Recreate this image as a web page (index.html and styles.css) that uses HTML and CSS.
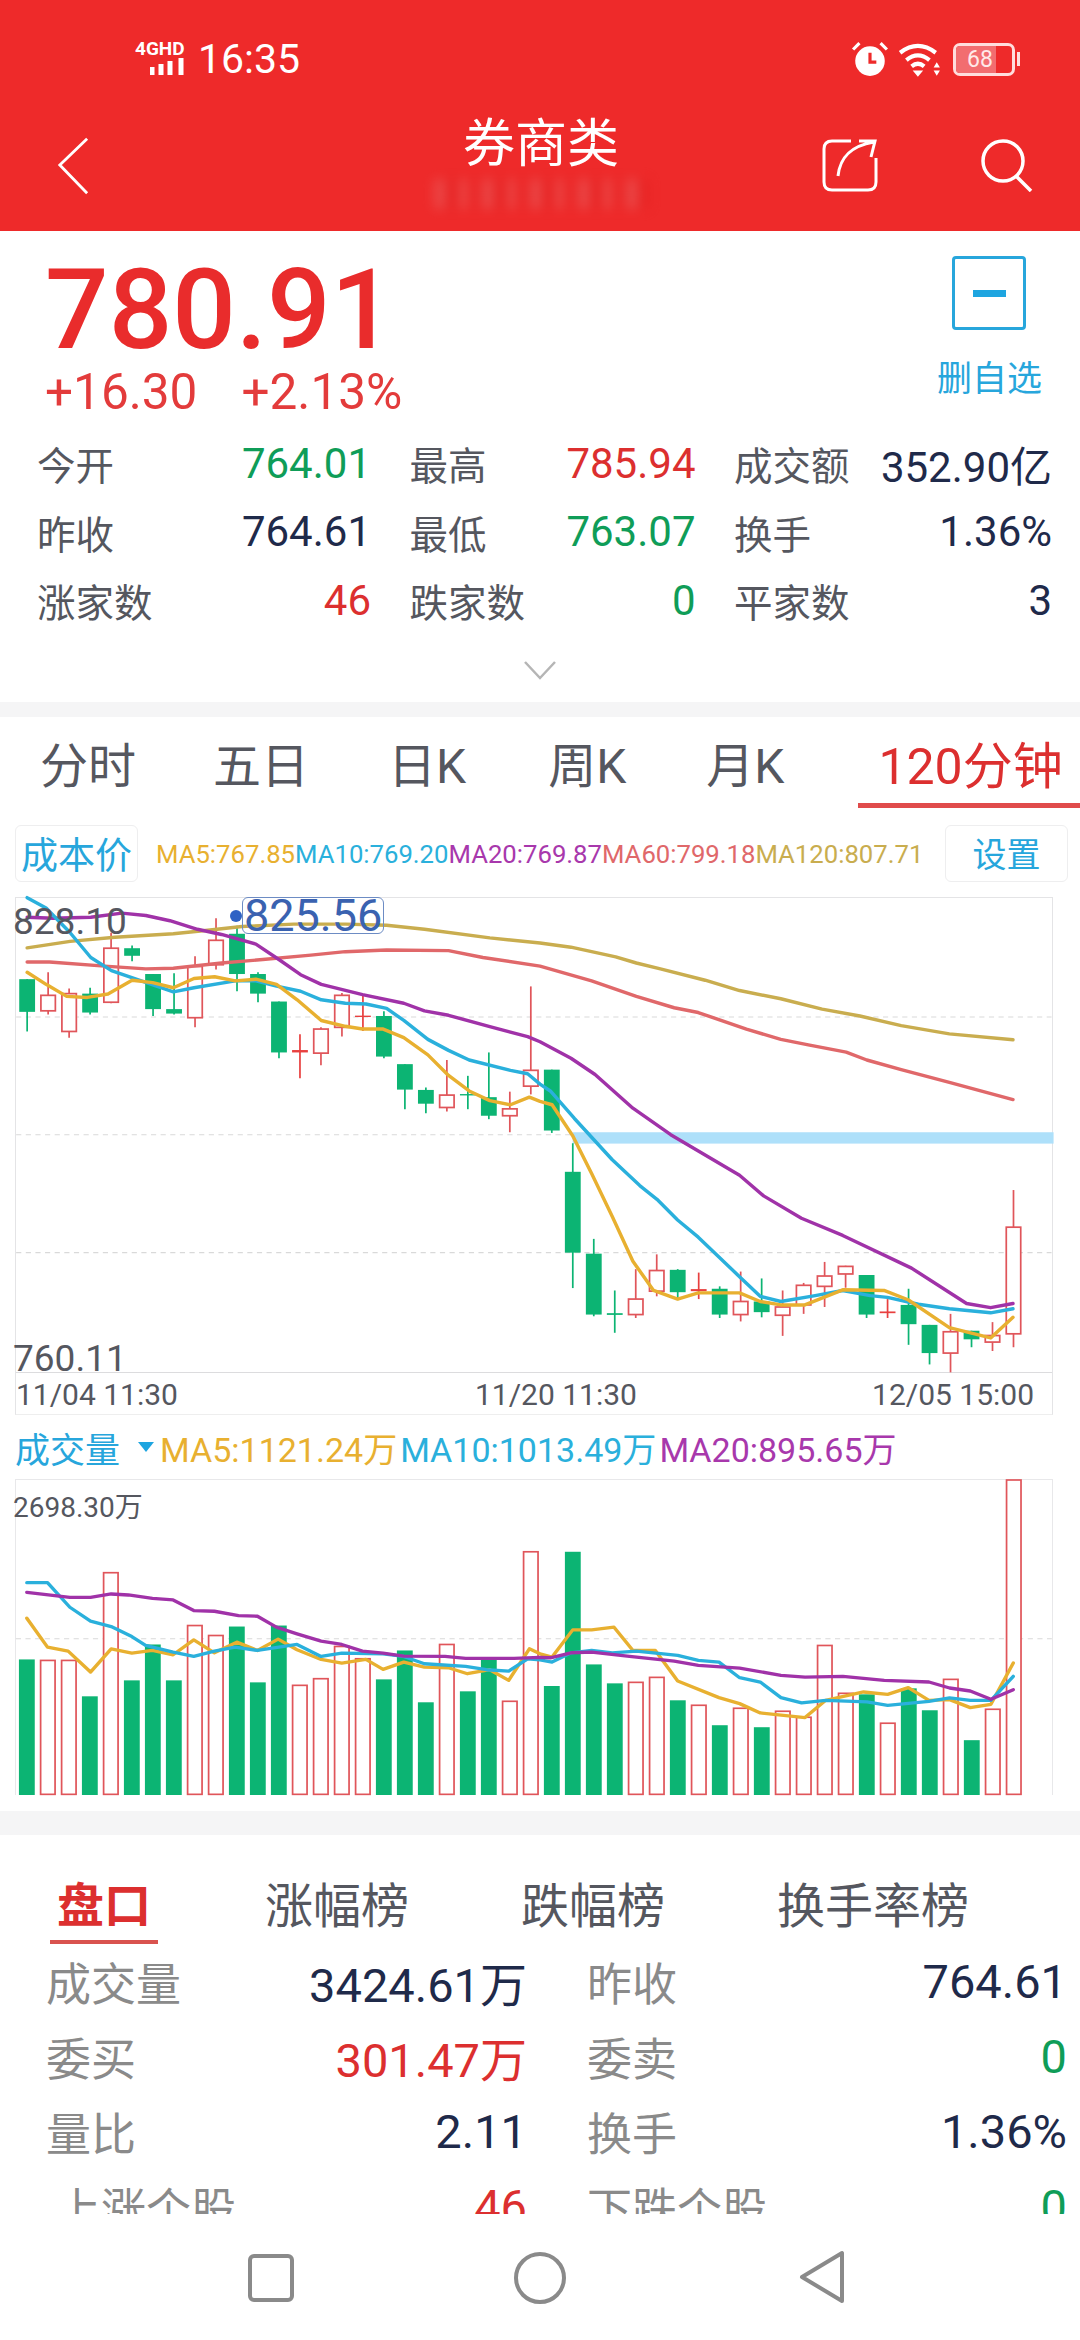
FILE: index.html
```html
<!DOCTYPE html>
<html lang="zh-CN">
<head>
  <meta charset="UTF-8">
  <title>券商类</title>
  <meta name="viewport" content="width=device-width, initial-scale=1.0">
  <link rel="stylesheet" href="styles.css">
</head>
<body>
  <header class="topbar">
    <div class="statusbar">
      <div class="net">
        <span class="net-type">4GHD</span>
        <svg class="net-bars" viewBox="0 0 38 18"><path d="M2 9v8M11 6v11M20 3v14M31 0v17" stroke="#fff" stroke-width="5"/></svg>
      </div>
      <span class="clock">16:35</span>
      <div class="status-right">
        <svg class="ic-alarm" viewBox="0 0 36 36"><circle cx="18" cy="20" r="14" fill="#fff"/><path d="M18 12v9h6" fill="none" stroke="#ee2a2a" stroke-width="3"/><path d="M2 9l6-6M34 9l-6-6" stroke="#fff" stroke-width="3"/></svg>
        <svg class="ic-wifi" viewBox="0 0 42 36"><path d="M2 12q17-13 34 0M8 19q11-9 22 0M13 25q6-5 12 0" fill="none" stroke="#fff" stroke-width="4"/><path d="M19 35l-5-6h10zM37 21l3 5h-6zM37 34l-3-5h6z" fill="#fff"/></svg>
        <div class="battery"><span class="battery-fill"></span><span class="battery-num">68</span></div>
        <span class="battery-nub"></span>
      </div>
    </div>
    <nav class="navbar">
      <svg class="ic-back" viewBox="0 0 34 62"><path d="M32 2L3 30l29 30" fill="none" stroke="#fff" stroke-width="3"/></svg>
      <div class="nav-title">
        <div class="title">券商类</div>
        <div class="subtitle-blur"></div>
      </div>
      <div class="nav-actions">
        <svg class="ic-share" viewBox="0 0 56 54"><path d="M29 3H10Q2 3 2 11v33q0 8 8 8h36q8 0 8-8V20M16 38C18 20 28 8 52 4M37 3l16 0-4 16" fill="none" stroke="#fff" stroke-width="3"/></svg>
        <svg class="ic-search" viewBox="0 0 54 54"><circle cx="23" cy="23" r="20" fill="none" stroke="#fff" stroke-width="3.5"/><path d="M36 38l15 15" stroke="#fff" stroke-width="3.5"/></svg>
      </div>
    </nav>
  </header>

  <section class="quote">
    <div class="quote-top">
      <div>
        <div class="price">780.91</div>
        <div class="change"><span>+16.30</span><span>+2.13%</span></div>
      </div>
      <div class="watch">
        <div class="watch-box"><span class="watch-minus"></span></div>
        <div class="watch-label">删自选</div>
      </div>
    </div>
    <div class="stats">
      <div class="stat"><span>今开</span><b class="green">764.01</b></div>
      <div class="stat"><span>最高</span><b class="red">785.94</b></div>
      <div class="stat"><span>成交额</span><b class="navy">352.90亿</b></div>
      <div class="stat"><span>昨收</span><b class="navy">764.61</b></div>
      <div class="stat"><span>最低</span><b class="green">763.07</b></div>
      <div class="stat"><span>换手</span><b class="navy">1.36%</b></div>
      <div class="stat"><span>涨家数</span><b class="red">46</b></div>
      <div class="stat"><span>跌家数</span><b class="green">0</b></div>
      <div class="stat"><span>平家数</span><b class="navy">3</b></div>
    </div>
    <svg class="ic-more" viewBox="0 0 34 20"><path d="M2 2l15 16L32 2" fill="none" stroke="#b5b5b5" stroke-width="2.5"/></svg>
  </section>

  <div class="band"></div>

  <section class="periods">
    <span>分时</span>
    <span>五日</span>
    <span>日K</span>
    <span>周K</span>
    <span>月K</span>
    <span class="on">120分钟</span>
  </section>

  <div class="ma-row">
    <span class="chip chip-cost">成本价</span>
    <div class="ma-list">
      <span class="c-ma5">MA5:767.85</span><span class="c-ma10">MA10:769.20</span><span class="c-ma20">MA20:769.87</span><span class="c-ma60">MA60:799.18</span><span class="c-ma120">MA120:807.71</span>
    </div>
    <span class="chip">设置</span>
  </div>

  <div class="kline">
    <div class="plot">
      <svg id="klineSvg" viewBox="43.5 49 3010 1378"></svg>
      <span class="axis-val top">828.10</span>
      <span class="axis-val low">760.11</span>
      <span class="high-dot"></span>
      <span class="high-tag">825.56</span>
    </div>
    <div class="dates">
      <span>11/04 11:30</span>
      <span class="mid">11/20 11:30</span>
      <span class="end">12/05 15:00</span>
    </div>
  </div>

  <div class="vol-row">
    <span class="vol-name">成交量</span>
    <span class="vol-caret"></span>
    <span class="c-ma5">MA5:1121.24万</span>
    <span class="c-ma10">MA10:1013.49万</span>
    <span class="c-ma20">MA20:895.65万</span>
  </div>

  <div class="vol">
    <svg id="volSvg" viewBox="43.5 177 3010 948" preserveAspectRatio="none"></svg>
    <span class="vol-max">2698.30万</span>
  </div>

  <div class="band band-lg"></div>

  <section class="board">
    <div class="board-tabs">
      <span class="on">盘口</span>
      <span>涨幅榜</span>
      <span>跌幅榜</span>
      <span>换手率榜</span>
    </div>
    <div class="board-grid">
      <div class="cell"><span>成交量</span><b class="navy">3424.61万</b></div>
      <div class="cell"><span>昨收</span><b class="navy">764.61</b></div>
      <div class="cell"><span>委买</span><b class="red">301.47万</b></div>
      <div class="cell"><span>委卖</span><b class="green">0</b></div>
      <div class="cell"><span>量比</span><b class="navy">2.11</b></div>
      <div class="cell"><span>换手</span><b class="navy">1.36%</b></div>
      <div class="cell"><span class="indent">上涨个股</span><b class="red">46</b></div>
      <div class="cell"><span>下跌个股</span><b class="green">0</b></div>
    </div>
  </section>

  <footer class="softkeys">
    <svg class="key-square" viewBox="0 0 46 48"><rect x="2" y="2" width="42" height="44" rx="4" fill="none" stroke="#8a8a8a" stroke-width="4"/></svg>
    <svg class="key-circle" viewBox="0 0 52 52"><circle cx="26" cy="26" r="24" fill="none" stroke="#8a8a8a" stroke-width="4"/></svg>
    <svg class="key-back" viewBox="0 0 46 54"><path d="M43 3v48L3 27z" fill="none" stroke="#8a8a8a" stroke-width="4" stroke-linejoin="round"/></svg>
  </footer>

  <script src="chart.js"></script>
</body>
</html>
```

FILE: styles.css
```css
:root {
  --red:#e92c2c;
  --green:#0f9d58;
  --navy:#1f2a4a;
  --blue:#27a6dc;
  --label:#55575f;
  --gray:#8a8a8a;
  --line:#e4e4e6;
}
* {box-sizing:border-box;}
html, body {
  margin:0; padding:0;
  width:1080px; height:2340px;
  overflow:hidden;
  background:#fff;
  font-family:Roboto,"Noto Sans CJK SC",sans-serif;
  color:var(--navy);
}
b {font-weight:400;}
.red {color:#dc2f2f;}
.green {color:var(--green);}
.navy {color:var(--navy);}

/* top red area */
.topbar {height:231px; background:#ee2a2a; color:#fff;}
.statusbar {
  height:102px;
  padding:16px 60px 0 135px;
  display:flex; align-items:center;
}
.net {width:63px; height:36px; display:flex; flex-direction:column; align-items:flex-end; margin-top:-2px;}
.net-type {width:63px; font-size:19px; line-height:18px; font-weight:700;}
.net-bars {width:38px; height:18px; margin-right:10px;}
.clock {font-size:41px; line-height:48px;}
.status-right {margin-left:auto; display:flex; align-items:center;}
.ic-alarm {width:38px; height:38px; margin-right:9px;}
.ic-wifi {width:44px; height:38px; margin-right:11px;}
.battery {
  position:relative;
  width:62px; height:33px;
  border:3px solid #fdd;
  border-radius:7px;
  overflow:hidden;
}
.battery-fill {position:absolute; left:0; top:0; bottom:0; width:40px; background:#f26d70;}
.battery-num {position:absolute; left:0; width:48px; text-align:center; font-size:23px; line-height:27px; color:#ffe9e9;}
.battery-nub {width:3px; height:14px; margin-left:2px; background:#fdd;}

.navbar {
  height:129px;
  padding:0 46px 0 48px;
  display:grid; grid-template-columns:1fr 220px 1fr; align-items:start;
}
.ic-back {width:32px; height:60px; margin:34px 0 0 9px;}
.nav-title {display:flex; flex-direction:column; align-items:center;}
.title {font-size:52px; line-height:60px; margin-top:8px; font-family:"Noto Sans CJK SC",sans-serif;}
.subtitle-blur {
  width:215px; height:30px; margin-top:9px;
  background:repeating-linear-gradient(90deg,#e86a6a 0 12px,#e01c1c 12px 26px,#f08a88 26px 32px,#e62626 32px 48px);
  filter:blur(6px);
  opacity:.45;
}
.nav-actions {display:flex; gap:102px; margin-top:36px; justify-content:flex-end;}
.ic-share {width:56px; height:54px;}
.ic-search {width:54px; height:54px;}

/* quote */
.quote {height:471px; position:relative;}
.quote-top {display:flex; justify-content:space-between; padding:19px 38px 0 45px;}
.price {font-size:112px; line-height:120px; font-weight:500; color:var(--red);}
.change {display:flex; gap:44px; margin-top:-2px; font-size:49.5px; line-height:48px; color:#e33b3b;}
.watch {display:flex; flex-direction:column; align-items:center; padding-top:6px;}
.watch-box {
  width:74px; height:74px;
  border:3px solid var(--blue); border-radius:4px;
  display:flex; align-items:center; justify-content:center;
}
.watch-minus {width:33px; height:7px; background:#1ea5e0;}
.watch-label {margin-top:26px; font-size:35px; line-height:40px; color:var(--blue); font-family:"Noto Sans CJK SC",sans-serif;}

.stats {
  margin-top:13px; padding:0 28px 0 37px;
  display:grid;
  grid-template-columns:334px 286px 318px;
  column-gap:38.5px;
  grid-auto-rows:68.5px;
  font-size:38.5px;
}
.stat {display:flex; align-items:center; justify-content:space-between;}
.stat span {color:var(--label);}
.stat b {font-size:42px;}
.ic-more {display:block; width:34px; height:20px; margin:25px auto 0;}

.band {height:15px; background:#f5f5f6;}
.band-lg {height:24px; margin-top:16px;}

/* period tabs */
.periods {
  height:91px;
  padding:0 0 0 40px;
  display:flex; align-items:flex-end;
  font-size:48px; color:#55575f;
  white-space:nowrap;
  overflow:hidden;
}
.periods span {flex:none; line-height:100px; margin-right:79px; height:91px;}
.periods span:first-child {margin-right:77px;}
.periods span:nth-child(3) {margin-right:82px;}
.periods span:nth-child(4) {margin-right:80px;}
.periods span:nth-child(5) {margin-right:74px;}
.periods .on {
  margin-right:0;
  width:222px;
  padding-left:20px;
  font-size:50px;
  color:#dc2f2f;
  border-bottom:5px solid #e04b4b;
}

/* ma legend */
.ma-row {
  height:89px;
  padding:17px 12px 15px 15px;
  display:flex; align-items:center;
}
.chip {
  width:123px; height:57px;
  border:1px solid #eeeeef; border-radius:6px;
  text-align:center;
  font-size:34px; line-height:54px;
  color:var(--blue);
  font-family:"Noto Sans CJK SC",sans-serif;
}
.chip-cost {font-size:37px; white-space:nowrap;}
.ma-list {flex:1; padding-left:18px; font-size:25.7px; white-space:nowrap;}
.c-ma5 {color:#e8b030;}
.c-ma10 {color:#2ab0dc;}
.c-ma20 {color:#a838ac;}
.c-ma60 {color:#e0686a;}
.c-ma120 {color:#c9ad4f;}

/* candle chart */
.kline {
  width:1038px; height:518px;
  margin-left:15px;
  border:1px solid var(--line); border-bottom-color:#eee;
}
.plot {position:relative; height:475px; border-bottom:1px solid #dcdcde;}
.plot svg {display:block; width:1036px; height:474px; overflow:visible;}
.axis-val {position:absolute; left:-3px; font-size:37px; line-height:40px; color:var(--label);}
.axis-val.top {top:4px;}
.axis-val.low {bottom:-7px;}
.high-dot {position:absolute; left:214px; top:12px; width:12px; height:12px; border-radius:50%; background:#2f62c4;}
.high-tag {
  position:absolute; left:226px; top:-1px;
  height:37px; padding:0 1px;
  border:1px solid #6d8cc4; border-radius:6px;
  font-size:45px; line-height:35px;
  color:#3a62b0;
}
.dates {
  height:42px; padding:0 18px 0 0;
  display:flex; align-items:center;
  font-size:30px; color:var(--label);
}
.dates .mid {margin-left:297px;}
.dates .end {margin-left:auto;}

/* volume */
.vol-row {
  height:64px;
  padding:0 0 0 15px;
  display:flex; align-items:center;
  font-size:34px;
  white-space:nowrap;
  gap:3px;
}
.vol-name {font-size:35px; color:var(--blue); margin-right:15px; font-family:"Noto Sans CJK SC",sans-serif;}
.vol-caret {
  width:0; height:0; margin-right:3px;
  border-left:8px solid transparent; border-right:8px solid transparent;
  border-top:10px solid #1ea5e0;
}
.vol {
  position:relative;
  width:1038px; height:316px;
  margin-left:15px;
  border:1px solid #e8e8ea; border-bottom:0;
}
.vol svg {display:block; width:1036px; height:315px; overflow:visible;}
.vol-max {position:absolute; left:-3px; top:12px; font-size:28px; line-height:32px; color:var(--label);}

/* board below */
.board {height:379px; overflow:hidden; position:relative;}
.board-tabs {
  height:105px;
  padding:0 0 0 50px;
  display:flex;
  font-size:48px; color:#55575f;
  font-family:"Noto Sans CJK SC",sans-serif;
  white-space:nowrap;
}
.board-tabs span {flex:none; line-height:134px; height:109px; margin-right:112px;}
.board-tabs span:nth-child(1) {width:108px; margin-right:107px; text-align:center; font-weight:700; font-size:47px; color:#dc2f2f; border-bottom:4px solid #d9534f;}
.board-grid {
  margin-top:4px;
  padding:0 15px 0 46px;
  display:grid;
  grid-template-columns:481px 480px;
  column-gap:60px;
  grid-auto-rows:75px;
  font-size:45px;
}
.cell {display:flex; align-items:center; justify-content:space-between;}
.cell span {color:var(--gray);}
.cell b {font-size:47px;}
.cell .indent {padding-left:10px;}

.softkeys {
  height:126px;
  padding:36px 0 0 248px;
  display:flex; align-items:flex-start;
}
.key-square {width:46px; height:48px; margin-top:4px;}
.key-circle {width:52px; height:52px; margin:2px 0 0 220px;}
.key-back {width:46px; height:54px; margin-left:233px;}
```

FILE: chart.js
```js
// chart data is kept in chart units: 2.9 per screen px across, same units in the viewBox
(function(){
  const GREEN='#0cb473', RED='#e0555a', CROSS='#e8403f';
  const X0=75, STEP=61.01;
  const colX=i=>X0+STEP*i;

  // [up?, wickTop, wickBottom, bodyTop, bodyBottom]
  const candles=[
    [0,285,437,285,380],[1,265,388,332,377],[1,312,455,327,437],[0,310,388,327,382],
    [1,150,355,195,352],[0,187,233,195,217],[0,270,392,270,372],[0,268,388,372,385],
    [1,218,425,248,397],[1,108,257,172,243],[0,130,320,153,270],[0,265,352,270,327],
    [0,350,515,350,498],[1,445,573,491,498],[1,425,535,430,500],[1,325,452,332,425],
    [1,332,436,391,395],[0,378,515,392,510],[0,532,663,532,606],[0,600,675,607,647],
    [1,520,670,622,658],[0,566,663,619,623],[0,498,692,628,682],[1,612,730,662,682],
    [1,306,620,550,596],[0,548,732,548,725],[0,762,1183,845,1080],[0,1040,1265,1083,1260],
    [0,1190,1313,1256,1261],[1,1128,1270,1215,1260],[1,1085,1207,1132,1192],[0,1128,1218,1130,1195],
    [1,1138,1215,1186,1192],[0,1178,1270,1185,1260],[1,1135,1280,1222,1260],[0,1155,1268,1222,1253],
    [1,1190,1322,1238,1262],[1,1168,1258,1175,1232],[1,1107,1238,1148,1178],[1,1118,1182,1120,1142],
    [0,1145,1270,1145,1260],[1,1215,1270,1251,1256],[0,1185,1348,1232,1288],[0,1290,1405,1290,1372],
    [1,1258,1428,1310,1372],[0,1307,1355,1307,1332],[1,1282,1366,1321,1340],[1,898,1355,1006,1316]
  ];

  const priceLines=[
    ['#c9ad4f','75,194 200,175 330,163 500,153 600,143 700,132 850,125 1000,125 1120,128 1230,140 1420,165 1566,180 1656,192 1786,220 1846,238 1916,255 2046,288 2146,318 2266,342 2386,372 2496,392 2616,420 2756,444 2941,461'],
    ['#e0686a','75,235 140,235 300,247 420,255 500,253 640,238 760,228 900,215 1000,205 1120,200 1300,202 1400,222 1566,247 1716,290 1846,335 1956,368 2026,382 2166,430 2266,460 2346,476 2456,497 2516,520 2616,548 2756,585 2941,635'],
    ['#a032a8','75,105 150,108 260,105 350,93 420,100 490,115 570,140 640,155 740,183 810,230 870,272 930,300 1050,330 1170,355 1230,377 1300,390 1420,423 1530,452 1566,467 1656,515 1726,562 1836,660 1946,737 2146,855 2216,915 2326,980 2446,1030 2646,1125 2806,1228 2876,1240 2941,1228'],
    ['#2ab0dc','75,48 130,78 200,150 260,222 320,260 500,322 560,310 680,290 740,290 800,305 870,320 930,345 1000,355 1060,357 1120,370 1170,405 1240,460 1300,492 1360,520 1480,550 1530,560 1566,590 1596,610 1666,690 1776,810 1856,885 1906,925 1966,985 2026,1035 2146,1150 2206,1207 2266,1222 2366,1205 2446,1190 2526,1205 2576,1210 2666,1230 2756,1243 2876,1255 2941,1243'],
    ['#e8b030','75,265 130,300 190,335 250,338 310,328 380,288 440,295 500,310 560,283 620,278 680,290 740,285 800,300 860,345 930,405 1000,422 1050,430 1110,430 1170,455 1240,505 1300,565 1360,610 1420,638 1480,650 1535,628 1566,640 1601,650 1661,740 1716,850 1776,975 1836,1105 1896,1190 1966,1215 2026,1197 2146,1197 2206,1222 2266,1232 2336,1232 2446,1188 2566,1190 2636,1217 2756,1298 2876,1328 2941,1268']
  ];

  // [up?, top] for each volume bar, bars stand on y=1125
  const bars=[
    [0,717],[1,720],[1,720],[0,828],[1,456],[0,780],[0,672],[0,780],[1,615],[1,645],[0,618],[0,786],
    [0,615],[1,795],[1,775],[1,678],[1,715],[0,777],[0,690],[0,846],[1,672],[0,813],[0,715],[1,843],
    [1,393],[0,797],[0,393],[0,732],[0,789],[1,786],[1,771],[0,840],[1,855],[0,915],[1,864],[0,921],
    [1,873],[1,891],[1,675],[1,819],[0,822],[1,909],[0,804],[0,870],[1,777],[0,960],[1,867],[1,177]
  ];

  const volLines=[
    ['#e8b030','75,593 135,680 195,692 260,755 320,685 380,698 440,690 500,703 560,658 620,697 685,665 745,690 805,656 860,688 930,717 990,728 1060,717 1110,747 1170,725 1230,740 1300,742 1355,760 1420,748 1475,780 1535,685 1566,700 1601,710 1661,628 1716,628 1781,620 1836,690 1901,690 1966,782 2086,832 2146,850 2206,878 2336,892 2396,840 2506,815 2576,822 2636,802 2696,840 2756,838 2816,862 2876,852 2941,728'],
    ['#2ab0dc','75,486 135,486 200,560 260,602 320,618 380,648 420,675 500,695 560,708 620,692 680,680 745,690 860,672 930,708 990,698 1110,700 1170,708 1230,730 1350,738 1410,748 1475,752 1530,715 1566,718 1601,725 1656,697 1716,690 1776,697 1846,692 1966,705 2026,720 2086,725 2146,772 2206,785 2266,832 2326,848 2396,840 2516,845 2576,855 2696,843 2756,833 2816,840 2876,840 2941,768'],
    ['#a032a8','75,515 200,530 260,530 320,520 370,523 440,533 500,538 560,570 620,572 690,585 745,587 800,620 860,640 930,662 990,672 1050,692 1110,698 1170,707 1290,708 1350,714 1490,714 1566,711 1596,712 1656,697 1716,695 1826,708 1956,722 2026,735 2146,743 2266,765 2336,770 2446,768 2566,780 2696,785 2756,803 2816,812 2876,837 2941,808']
  ];

  const dash=y=>`<line x1="43" x2="3053" y1="${y}" y2="${y}" stroke="#d9d9d9" stroke-width="3" stroke-dasharray="15 13"/>`;
  const poly=([color,pts],w)=>`<polyline points="${pts}" fill="none" stroke="${color}" stroke-width="${w}" stroke-linejoin="round" stroke-linecap="round"/>`;

  function candle([up,wt,wb,bt,bb],i){
    const x=colX(i), cross=bb-bt<10;
    const color=up?(cross?CROSS:RED):GREEN;
    let s=`<line x1="${x}" x2="${x}" y1="${wt}" y2="${wb}" stroke="${color}" stroke-width="5"/>`;
    if(up && !cross) s+=`<rect x="${x-21}" y="${bt}" width="42" height="${bb-bt}" fill="#fff" stroke="${color}" stroke-width="5"/>`;
    else s+=`<rect x="${x-23}" y="${bt}" width="46" height="${bb-bt}" fill="${color}"/>`;
    return s;
  }

  function bar([up,top],i){
    const x=colX(i);
    return up
      ? `<rect x="${x-21}" y="${top}" width="42" height="${1123-top}" fill="#fff" stroke="${RED}" stroke-width="5"/>`
      : `<rect x="${x-23}" y="${top}" width="46" height="${1125-top}" fill="${GREEN}"/>`;
  }

  document.getElementById('klineSvg').innerHTML=
    dash(395)+dash(737)+dash(1080)+
    '<rect x="1661" y="730" width="1398" height="33" fill="#aee0fa"/>'+
    candles.map(candle).join('')+
    priceLines.map(l=>poly(l,10)).join('');

  document.getElementById('volSvg').innerHTML=
    dash(655)+
    bars.map(bar).join('')+
    volLines.map(l=>poly(l,10)).join('');
})();
```
